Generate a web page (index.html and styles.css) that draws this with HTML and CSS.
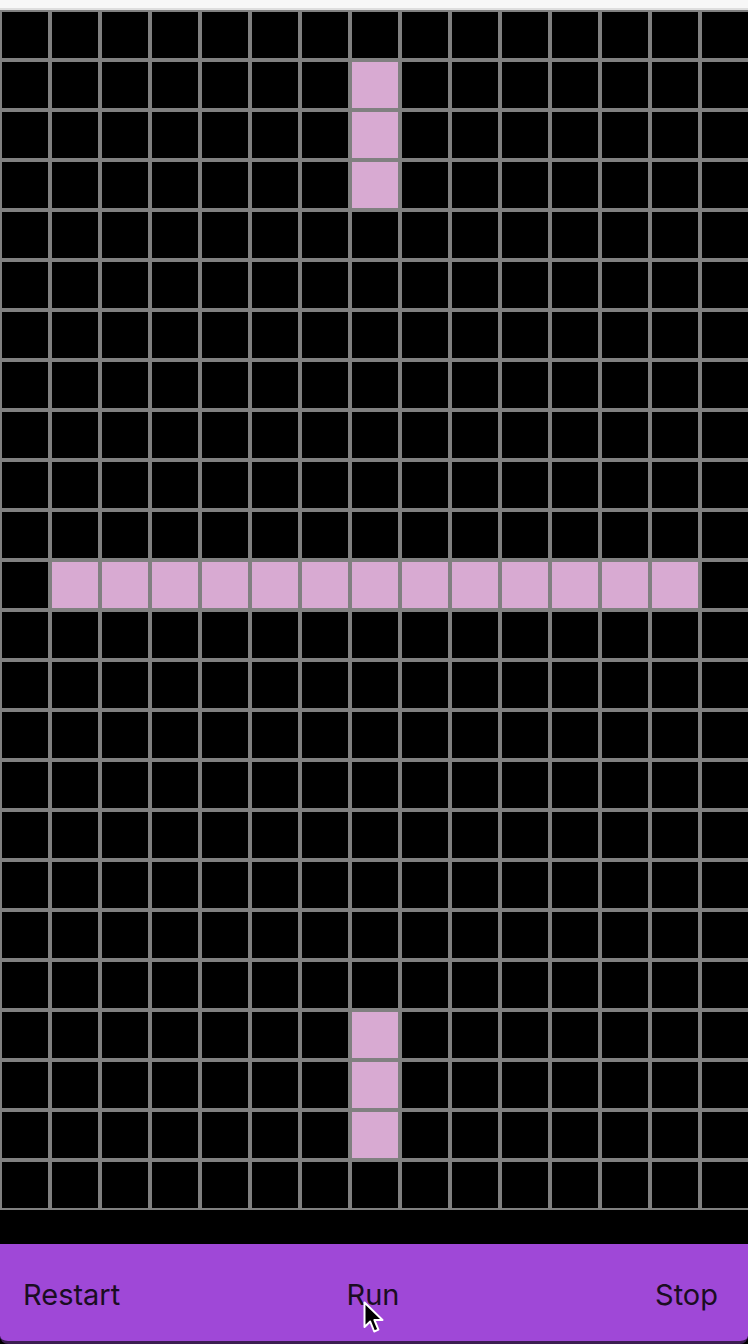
FILE: index.html
```html
<!DOCTYPE html>
<html lang="en">
<head>
    <meta charset="UTF-8">
    <meta name="viewport" content="width=device-width, initial-scale=1.0">
    <title>Game of Life</title>
    <link rel="stylesheet" href="styles.css">
</head>
<body>
    <div class="titlebar"></div>
    <div class="board" id="board"></div>
    <div class="gap"></div>
    <div class="controls">
        <span class="btn left">Restart</span>
        <span class="btn middle">Run</span>
        <span class="btn right">Stop</span>
        <svg class="cursor" width="24" height="36" viewBox="0 0 24 36">
            <path d="M1.5 1.5 L1.5 26 L7.2 20.5 L11.2 30.5 L15.4 28.7 L11.4 19 L19.5 19 Z" fill="#000" stroke="#fff" stroke-width="2" stroke-linejoin="round"/>
        </svg>
    </div>

    <script>
        var cols = 15;
        var rows = 24;
        var alive = {};
        // vertical bars at top and bottom
        [1, 2, 3, 20, 21, 22].forEach(function (r) { alive[r + ',7'] = true; });
        // horizontal line in the middle
        for (var c = 1; c <= 13; c++) {
            alive['11,' + c] = true;
        }

        var board = document.getElementById('board');
        for (var r = 0; r < rows; r++) {
            for (var c = 0; c < cols; c++) {
                var cell = document.createElement('div');
                cell.className = alive[r + ',' + c] ? 'cell on' : 'cell';
                board.appendChild(cell);
            }
        }
    </script>
</body>
</html>
```

FILE: styles.css
```css
body {
    margin: 0;
    padding: 0;
    background-color: #000;
    font-family: Inter, "Noto Sans", sans-serif;
    overflow: hidden;
}
.titlebar {
    height: 8px;
    background-color: #f7f7f7;
    border-bottom: 2px solid #dedede;
}
.board {
    display: grid;
    grid-template-columns: repeat(15, 50px);
    grid-auto-rows: 50px;
    width: 748px;
    overflow: hidden;
}
.cell {
    box-sizing: border-box;
    border: 2px solid #808080;
    background-color: #000;
}
.cell.on {
    background-color: #d8aad2;
}
.gap {
    height: 34px;
}
.controls {
    position: relative;
    display: grid;
    grid-template-columns: 1fr auto 1fr;
    align-items: center;
    height: 93px;
    padding: 4px 30px 0 23px;
    background-color: #9f48d7;
    border-bottom: 3px solid #3c1d52;
    border-radius: 0 0 8px 8px;
    color: #1a0d22;
    font-size: 29px;
}
.btn.left {
    justify-self: start;
}
.btn.middle {
    justify-self: center;
    margin-left: 5px;
}
.btn.right {
    justify-self: end;
}
.cursor {
    position: absolute;
    left: 363px;
    top: 57px;
}
```
